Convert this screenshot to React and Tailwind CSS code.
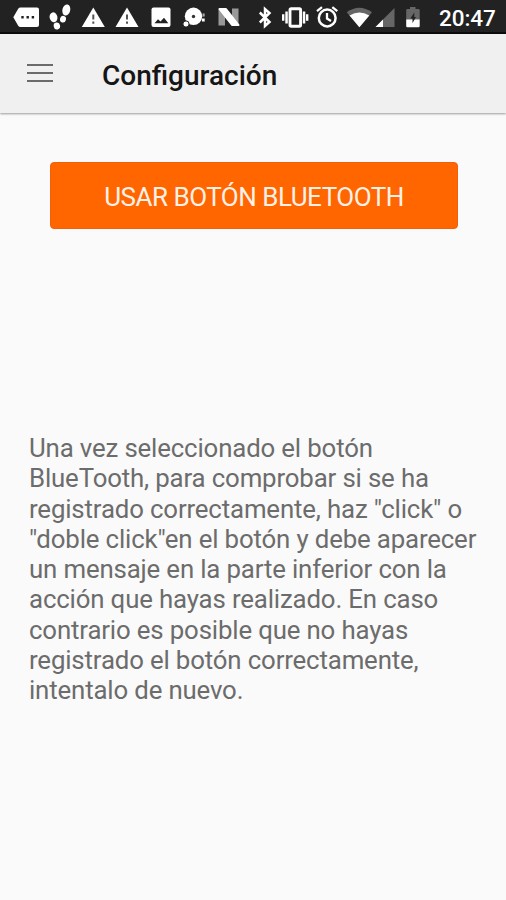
import React from "react";

// Status glyphs share one coordinate space; each one shows its own slice of the bar.
function Glyph({ x, w, children }) {
  return (
    <svg className="shrink-0" width={w} height="34" viewBox={`${x} 0 ${w} 34`} fill="#fff" aria-hidden="true">
      {children}
    </svg>
  );
}

function Warning({ x, w, cx }) {
  return (
    <Glyph x={x} w={w}>
      <g transform={`translate(${cx} 0)`}>
        <path d="M0 7.5 11.5 27h-23Z" />
        <path d="M-1 14.500h2v5h-2ZM-1 21.500h2v2.300h-2Z" fill="#555" />
      </g>
    </Glyph>
  );
}

function StatusBar() {
  return (
    <div className="flex h-[34px] items-center border-b-2 border-[#0c0c0c] bg-[#222222] text-white">
      <div className="flex h-[34px] shrink-0 self-start">
        <Glyph x={0} w={45}>
          <path d="M20.5 7.5H37a2 2 0 0 1 2 2V25a2 2 0 0 1-2 2H20.500q-1.500 0-2.300-1.200L13.300 17.200l4.900-8.500q.8-1.200 2.300-1.200Z" />
          <path d="M21.300 16h2.400v2.400h-2.400ZM26.500 16h2.400v2.400h-2.400ZM31.700 16h2.400v2.400h-2.400Z" fill="#222" />
        </Glyph>
        <Glyph x={45} w={31}>
          <ellipse cx="53.500" cy="17.300" rx="3.900" ry="5" transform="rotate(-12 53.500 17.300)" />
          <ellipse cx="56.900" cy="26" rx="3.200" ry="3.500" transform="rotate(-12 56.900 26)" />
          <ellipse cx="66.300" cy="10" rx="3.900" ry="5.600" transform="rotate(14 66.300 10)" />
          <ellipse cx="63" cy="19.200" rx="3" ry="3.300" transform="rotate(14 63 19.200)" />
        </Glyph>
        <Warning x={76} w={34} cx={93.3} />
        <Warning x={110} w={34} cx={127} />
        <Glyph x={144} w={34}>
          <rect x="151.500" y="7.500" width="19" height="19.500" rx="2" />
          <path d="m154.500 23.200 3.500-4 2.500 2.200 3.500-3.700 4.300 5.500Z" fill="#222" />
        </Glyph>
        <Glyph x={178} w={34}>
          <circle cx="193.500" cy="16.300" r="8.700" />
          <circle cx="193.500" cy="16.500" r="1.700" fill="#333" />
          <circle cx="186" cy="24" r="3.100" stroke="#222" strokeWidth="1" />
          <rect x="202" y="18.500" width="2.700" height="3" />
          <rect x="202.500" y="13.500" width="2.200" height="3" fill="#aaa" />
        </Glyph>
        <Glyph x={212} w={38}>
          <path d="M218.500 8.500 225 14v11.500h-6.500ZM232 8.500h6.500v17l-6.500-5Z" fill="#999" />
          <path d="M219.500 9h6.500l12.500 16h-6.500Z" stroke="#fff" strokeWidth="2" strokeLinejoin="round" />
        </Glyph>
        <Glyph x={250} w={27}>
          <path d="m259.800 12.500 9.700 9.500-4.500 4v-17l4.500 4-9.700 9.500" fill="none" stroke="#fff" strokeWidth="2.500" />
        </Glyph>
        <Glyph x={277} w={36}>
          <rect x="290" y="8.700" width="10.600" height="17.600" rx="1.200" fill="none" stroke="#fff" strokeWidth="2.900" />
          <path d="M285.300 11.500h2.500v12h-2.500ZM282 14.200h2.400v6.500h-2.400ZM302.800 11.500h2.500v12h-2.500ZM306 14.200h2.400v6.500h-2.400Z" />
        </Glyph>
        <Glyph x={313} w={30}>
          <circle cx="327.200" cy="18" r="8.400" fill="none" stroke="#fff" strokeWidth="2.500" />
          <path d="M327 13v5.500l4 2.400M317 11.200l5-4M332.300 7.200l5 4" fill="none" stroke="#fff" strokeWidth="2.300" />
        </Glyph>
        <Glyph x={343} w={31}>
          <path d="M346.700 12.200q12.600-9 25.300 0L359.400 27.300Z" fill="#666" />
          <path d="M349.500 15.500q9.900-6 19.800 0l-9.900 11.800Z" />
        </Glyph>
        <Glyph x={374} w={25}>
          <path d="M394.500 8v19H375.500Z" fill="#666" />
          <path d="M383 19.500V27h-7.500Z" />
        </Glyph>
        <Glyph x={399} w={30}>
          <path d="M410 7h5.500v2h3a1.200 1.200 0 0 1 1.200 1.200V20h-13.500v-9.800A1.200 1.200 0 0 1 407.400 9h2.600Z" fill="#666" />
          <path d="M406.200 19.500h13.500v6.500a1.200 1.200 0 0 1-1.200 1.200h-11.100a1.200 1.200 0 0 1-1.200-1.200Z" />
          <path d="m414.300 12.500-4 6h2.200v4.500l3.500-6h-1.700Z" fill="#222" />
        </Glyph>
      </div>
      <time className="ml-[10px] pt-[4px] text-[22.5px] leading-none font-medium tracking-[-0.1px]">20:47</time>
    </div>
  );
}

const lines = [
  "Una vez seleccionado el botón",
  "BlueTooth, para comprobar si se ha",
  "registrado correctamente, haz \"click\" o",
  "\"doble click\"en el botón y debe aparecer",
  "un mensaje en la parte inferior con la",
  "acción que hayas realizado. En caso",
  "contrario es posible que no hayas",
  "registrado el botón correctamente,",
  "intentalo de nuevo.",
];

export default function App() {
  return (
    <div className="flex h-[900px] w-[506px] flex-col overflow-hidden bg-[#fafafa] font-[Roboto,sans-serif]">
      <StatusBar />
      <header className="flex h-[79px] shrink-0 items-center bg-[#f0f0f0] pl-[27px] shadow-[0_1px_2px_rgba(0,0,0,0.38)]">
        <button className="flex w-[26px] flex-col gap-[6px] pb-[2px]" aria-label="Menú">
          <span className="h-[2px] bg-[#6b6b6b]" />
          <span className="h-[2px] bg-[#6b6b6b]" />
          <span className="h-[2px] bg-[#6b6b6b]" />
        </button>
        <h1 className="ml-[49px] pt-[5px] text-[28px] leading-none font-medium text-[#161616]">Configuración</h1>
      </header>
      <main className="flex flex-col pt-[49px]">
        <button className="ml-[50px] flex h-[67px] w-[408px] items-center justify-center rounded-[4px] border border-[#f45f0a] bg-[#ff6600] pt-[3px] text-[26px] leading-none tracking-[-0.5px] whitespace-nowrap text-[#fff1e8]">
          USAR BOTÓN BLUETOOTH
        </button>
        <p className="mt-[204px] ml-[29px] text-[25.8px] leading-[30.25px] tracking-[-0.15px] whitespace-nowrap text-[#6c6c6c]">
          {lines.map((line) => (
            <span key={line} className="block">{line}</span>
          ))}
        </p>
      </main>
    </div>
  );
}
